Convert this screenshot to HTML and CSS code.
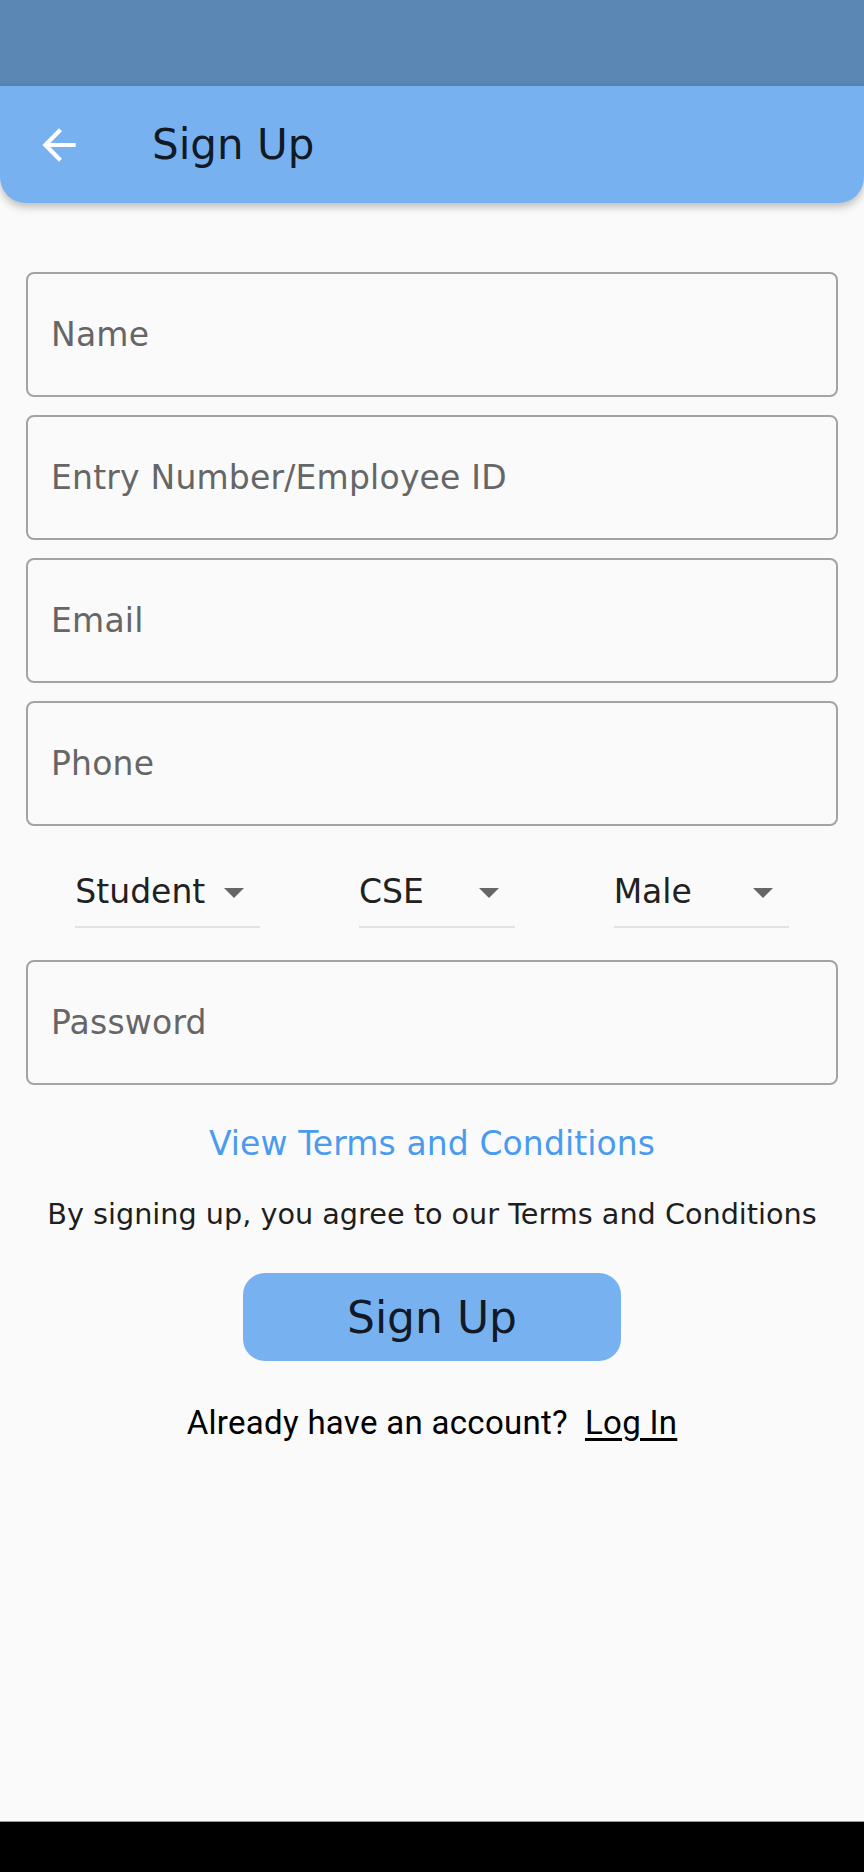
FILE: index.html
```html
<!DOCTYPE html>
<html>
<head>
<meta charset="utf-8">
<link rel="stylesheet" href="styles.css">
</head>
<body>
<div class="screen">
  <div class="status-bar"></div>
  <header class="app-bar">
    <span class="back">
      <svg width="50" height="50" viewBox="0 0 24 24"><path d="M20 11H7.83l5.59-5.59L12 4l-8 8 8 8 1.41-1.41L7.83 13H20v-2z" fill="#fff"/></svg>
    </span>
    <h1 class="title">Sign Up</h1>
  </header>
  <main class="content">
    <div class="field"><span class="label">Name</span></div>
    <div class="field"><span class="label">Entry Number/Employee ID</span></div>
    <div class="field"><span class="label">Email</span></div>
    <div class="field"><span class="label">Phone</span></div>
    <div class="dropdowns">
      <div class="dropdown w1"><span class="dd-text">Student</span><span class="caret"></span></div>
      <div class="dropdown w2"><span class="dd-text">CSE</span><span class="caret"></span></div>
      <div class="dropdown w3"><span class="dd-text">Male</span><span class="caret"></span></div>
    </div>
    <div class="field"><span class="label">Password</span></div>
    <p class="terms-link">View Terms and Conditions</p>
    <p class="agree">By signing up, you agree to our Terms and Conditions</p>
    <div class="btn-row"><button class="signup-btn">Sign Up</button></div>
    <p class="login">Already have an account?&nbsp;&nbsp;<span class="login-link">Log In</span></p>
  </main>
  <div class="nav-bar"></div>
</div>
</body>
</html>
```
FILE: styles.css
```css
* { box-sizing: border-box; }
html, body { margin: 0; padding: 0; }
body { background: #fafafa; font-family: "DejaVu Sans", sans-serif; }
.screen { width: 864px; height: 1872px; display: flex; flex-direction: column; background: #fafafa; }
.status-bar { height: 86px; background: #5a87b3; flex: none; }
.app-bar {
  height: 117px; flex: none; background: #77b1ef;
  border-radius: 0 0 26px 26px;
  box-shadow: 0 4px 8px rgba(0,0,0,0.25);
  display: flex; align-items: center;
  position: relative; z-index: 1;
}
.back { width: 50px; height: 50px; margin-left: 34px; display: flex; }
.title { margin: 0 0 0 68px; font-weight: normal; font-size: 42px; color: rgba(0,0,0,0.87); line-height: 50px; }
.content { flex: 1; padding: 69px 26px 0; display: flex; flex-direction: column; }
.field {
  height: 125px; border: 2px solid #a3a3a3; border-radius: 8px;
  display: flex; align-items: center; padding-left: 23px; margin-bottom: 18px;
}
.label { font-size: 33px; line-height: 40px; color: #666; letter-spacing: 0.2px; }
.dropdowns { display: flex; justify-content: space-around; margin: 28px 0 32px; }
.dropdown { display: flex; align-items: center; justify-content: space-between; border-bottom: 2px solid #e2e2e2; padding-bottom: 14px; }
.w1 { width: 185px; }
.w2 { width: 156px; }
.w3 { width: 175px; }
.dd-text { font-size: 33px; line-height: 40px; color: #212121; }
.caret { width: 0; height: 0; border-left: 10px solid transparent; border-right: 10px solid transparent; border-top: 10px solid #666; margin-right: 16px; margin-top: 2px; }
.terms-link { margin: 21px 0 0; text-align: center; font-size: 33px; line-height: 40px; color: #4a9bef; letter-spacing: 0.1px; }
.agree { margin: 33px 0 0; text-align: center; font-size: 28.7px; line-height: 34px; color: #1e1e1e; }
.btn-row { display: flex; justify-content: center; margin-top: 42px; }
.signup-btn {
  width: 378px; height: 88px; border: none; border-radius: 22px; background: #77b1ef;
  font-family: "DejaVu Sans", sans-serif; font-size: 44px; color: rgba(0,0,0,0.87); padding: 0;
}
.login { margin: 42px 0 0; text-align: center; font-family: Roboto, sans-serif; font-size: 33px; line-height: 40px; color: #000; letter-spacing: 0.3px; }
.login-link { text-decoration: underline; text-underline-offset: 4px; }
.nav-bar { height: 51px; flex: none; background: #000; border-top: 1px solid #9a9a9a; }
```
